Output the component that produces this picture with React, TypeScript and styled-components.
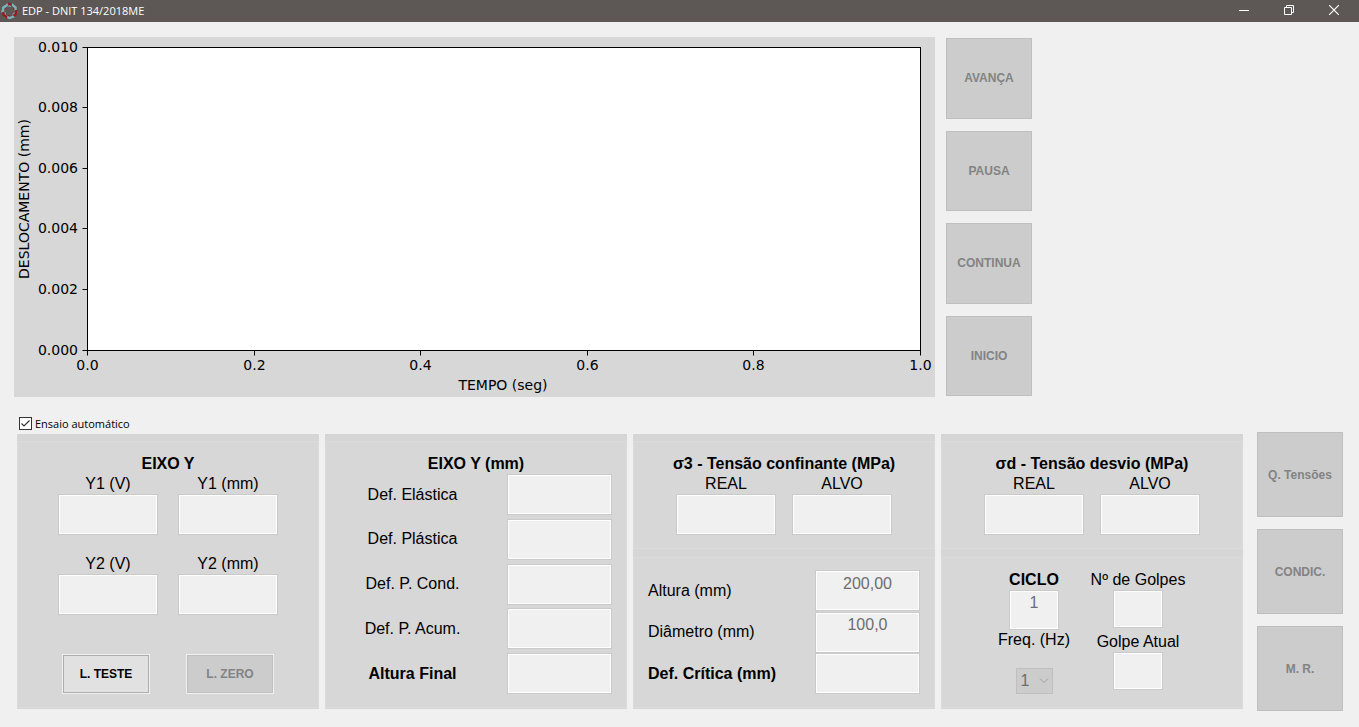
import React, { useState } from "react";
import styled, { createGlobalStyle, css } from "styled-components";

const GlobalStyle = createGlobalStyle`
  *, *::before, *::after { box-sizing: border-box; }
  body {
    margin: 0;
    background: #f0f0f0;
    color: #000;
    font: 16px/20px "Liberation Sans", Arial, sans-serif;
  }
`;

const uiFont = `"Open Sans", "Segoe UI", sans-serif`;

const TitleBar = styled.header`
  display: flex;
  align-items: center;
  height: 22px;
  padding: 0 3px 0 1px;
  background: #5d5855;
  color: #fff;
`;

const WindowTitle = styled.h1`
  flex: 1;
  margin: 0 0 0 4px;
  font: 400 11px/20px ${uiFont};
`;

const WindowButton = styled.button`
  display: flex;
  align-items: center;
  justify-content: center;
  width: 45px;
  height: 20px;
  margin-bottom: 2px;
  padding: 0;
  border: 0;
  background: transparent;
  color: #fff;
`;

const TopRow = styled.section`
  display: grid;
  grid-template-columns: minmax(0, 3fr) 86px minmax(0, 1fr);
  gap: 11px;
  padding: 15px 9px 0 14px;
`;

const ChartSvg = styled.svg`
  display: block;
  width: 100%;
  height: auto;
  background: #d7d7d7;
  font: 14px "DejaVu Sans", sans-serif;
`;

const ButtonColumn = styled.div`
  display: flex;
  flex-direction: column;
  gap: 12px;
`;

const RunColumn = styled(ButtonColumn)`
  padding: 1px 0;
`;

const buttonText = css`
  padding: 0;
  background: #cccccc;
  color: #838383;
  font: 700 12px/16px "Liberation Sans", Arial, sans-serif;
`;

const TileButton = styled.button`
  ${buttonText}
  flex: 1 0 auto;
  width: 86px;
  min-height: 80px;
  border: 1px solid #bfbfbf;
`;

const StageButton = styled(TileButton)`
  min-height: 85px;
`;

const PanelButton = styled.button`
  ${buttonText}
  width: 88px;
  height: 40px;
  border: 1px solid #f0f0f0;
  box-shadow: inset 0 0 0 1px #bfbfbf;

  &:enabled {
    background: #e1e1e1;
    color: #000;
    box-shadow: inset 0 0 0 1px #adadad;
  }
`;

const AutoLabel = styled.label`
  display: flex;
  align-items: center;
  gap: 3px;
  width: max-content;
  padding: 20px 0 2px 19px;
  font: 11px/13px ${uiFont};
`;

const CheckBox = styled.input`
  appearance: none;
  width: 13px;
  height: 13px;
  margin: 0;
  border: 1px solid #333;
  background: #fff;

  &:checked {
    background: #fff
      url("data:image/svg+xml,%3Csvg xmlns='http://www.w3.org/2000/svg' viewBox='0 0 11 11'%3E%3Cpath d='M1.5 5.5 4 8l5.5-5.5' fill='none' stroke='%23333' stroke-width='1.2'/%3E%3C/svg%3E");
  }
`;

const BottomRow = styled.section`
  display: flex;
  align-items: center;
  gap: 14px;
  padding: 0 16px 16px 17px;
`;

const Panels = styled.div`
  flex: 1;
  display: grid;
  grid-template-columns: repeat(4, minmax(0, 1fr));
  gap: 6px;
`;

const Panel = styled.div`
  display: flex;
  flex-direction: column;
  gap: 1px;
  min-height: 275px;
  padding-bottom: 1px;
  background: #d6d6d6;
`;

const Group = styled.section<{ $grow?: boolean }>`
  display: flex;
  flex-direction: column;
  flex: ${(p) => (p.$grow ? "1 0 auto" : "0 0 108px")};
  margin-top: 7px;
  padding-top: 12px;
  border: 1px solid #dbdbdb;
  background: #d7d7d7;
`;

const GroupTitle = styled.h2`
  margin: 0;
  font: 700 16px/20px "Liberation Sans", Arial, sans-serif;
  text-align: center;
`;

const FieldRow = styled.div<{ $gap: number; $after?: number }>`
  display: flex;
  justify-content: center;
  gap: ${(p) => p.$gap}px;
  margin-bottom: ${(p) => p.$after ?? 0}px;
`;

const StackField = styled.label<{ $bold?: boolean }>`
  display: flex;
  flex-direction: column;
  align-items: center;
  font-weight: ${(p) => (p.$bold ? 700 : 400)};
  white-space: nowrap;
`;

const ValueBox = styled.input<{ $width: number; $height?: number }>`
  width: ${(p) => p.$width}px;
  height: ${(p) => p.$height ?? 41}px;
  margin: 0;
  padding: 2px 2px 16px;
  border: 1px solid #cacaca;
  border-radius: 0;
  box-shadow: inset 0 0 0 1px #fff;
  background: #f0f0f0;
  color: #6d6d6d;
  font: 16px/18px "Liberation Sans", Arial, sans-serif;
  text-align: center;
`;

const RowList = styled.div`
  flex: 1;
  display: flex;
  flex-direction: column;
  justify-content: space-between;
  padding: 0 14px 13px;
`;

const RowField = styled.label<{ $bold?: boolean; $centered?: boolean }>`
  display: flex;
  align-items: center;
  font-weight: ${(p) => (p.$bold ? 700 : 400)};

  span {
    flex: 1;
    padding-right: ${(p) => (p.$centered ? 22 : 0)}px;
    text-align: ${(p) => (p.$centered ? "center" : "left")};
  }
`;

const CycleGrid = styled.div`
  display: grid;
  grid-template-columns: 104px 104px;
  justify-content: center;
  padding-right: 12px;
`;

const CycleColumn = styled.div<{ $gap: number }>`
  display: flex;
  flex-direction: column;
  align-items: center;
  gap: ${(p) => p.$gap}px;
`;

const FrequencyField = styled(StackField)`
  gap: 18px;
`;

const SelectWrap = styled.span`
  display: grid;
  align-items: center;

  > * { grid-area: 1 / 1; }
  > svg { justify-self: end; margin-right: 4px; pointer-events: none; }
`;

const FrequencySelect = styled.select`
  appearance: none;
  width: 37px;
  height: 26px;
  padding: 0 4px;
  border: 1px solid #bfbfbf;
  border-radius: 0;
  background: #cccccc;
  color: #6d6d6d;
  font: 16px/20px "Liberation Sans", Arial, sans-serif;
  opacity: 1;
`;

// Six overlapping blades around a hexagonal opening, alternating teal and red.
const Logo = () => (
  <svg width="17" height="18" viewBox="0 0 17 18" aria-hidden="true">
    {[0, 60, 120, 180, 240, 300].map((angle, i) => (
      <path
        key={angle}
        d="M.3 10.6 1.2 5 6.2 1.2 11.2 3.6 9.4 5 6.6 3.9 3.5 6.4 3 9.8Z"
        fill={i % 2 ? "#961c22" : "#74b4b8"}
        transform={`rotate(${angle} 8.5 9)`}
      />
    ))}
    <path d="M.3 10.6 1.2 5 6.2 1.2 7.4 3.4 3.5 6.4 3 9.8Z" fill="#74b4b8" />
  </svg>
);

const PLOT = { left: 73.5, right: 906.5, top: 10.5, bottom: 313.5 };
const X_TICKS = ["0.0", "0.2", "0.4", "0.6", "0.8", "1.0"];
const Y_TICKS = ["0.000", "0.002", "0.004", "0.006", "0.008", "0.010"];

const Chart = () => (
  <ChartSvg viewBox="0 0 921 360" role="img" aria-label="Deslocamento por tempo">
    <rect
      x={PLOT.left}
      y={PLOT.top}
      width={PLOT.right - PLOT.left}
      height={PLOT.bottom - PLOT.top}
      fill="#fff"
      stroke="#000"
    />
    {X_TICKS.map((t, i) => {
      const x = Math.floor(PLOT.left + ((PLOT.right - PLOT.left) * i) / 5) + 0.5;
      return (
        <g key={t}>
          <path d={`M${x} ${PLOT.bottom}v5`} stroke="#000" />
          <text x={x} y={333} textAnchor="middle">{t}</text>
        </g>
      );
    })}
    {Y_TICKS.map((t, i) => {
      const y = Math.floor(PLOT.bottom - 0.5 - ((PLOT.bottom - PLOT.top) * i) / 5) + 0.5;
      return (
        <g key={t}>
          <path d={`M${PLOT.left} ${y}h-5`} stroke="#000" />
          <text x={64} y={y + 4.5} textAnchor="end">{t}</text>
        </g>
      );
    })}
    <text x={489} y={353} textAnchor="middle">TEMPO (seg)</text>
    <text transform="translate(15 162) rotate(-90)" textAnchor="middle">DESLOCAMENTO (mm)</text>
  </ChartSvg>
);

type FieldProps = { label: string; value?: string; width?: number; height?: number; bold?: boolean };

const Stacked = ({ label, value = "", width = 100, height, bold }: FieldProps) => (
  <StackField $bold={bold}>
    {label}
    <ValueBox $width={width} $height={height} value={value} disabled readOnly />
  </StackField>
);

const Row = ({ label, value = "", bold, centered }: FieldProps & { centered?: boolean }) => (
  <RowField $bold={bold} $centered={centered}>
    <span>{label}</span>
    <ValueBox $width={105} value={value} disabled readOnly />
  </RowField>
);

export default function App() {
  const [auto, setAuto] = useState(true);

  return (
    <>
      <GlobalStyle />
      <TitleBar>
        <Logo />
        <WindowTitle>EDP - DNIT 134/2018ME</WindowTitle>
        <WindowButton aria-label="Minimizar">
          <svg width="10" height="10" stroke="currentColor"><path d="M0 5.5h10" /></svg>
        </WindowButton>
        <WindowButton aria-label="Restaurar">
          <svg width="10" height="10" fill="none" stroke="currentColor">
            <path d="M.5 2.5h7v7h-7zM2.5 2.5v-2h7v7h-2" />
          </svg>
        </WindowButton>
        <WindowButton aria-label="Fechar">
          <svg width="10" height="10" stroke="currentColor" strokeWidth="1.2"><path d="M0 0 10 10M10 0 0 10" /></svg>
        </WindowButton>
      </TitleBar>

      <main>
        <TopRow>
          <Chart />
          <RunColumn>
            {["AVANÇA", "PAUSA", "CONTINUA", "INICIO"].map((t) => (
              <TileButton key={t} disabled>{t}</TileButton>
            ))}
          </RunColumn>
        </TopRow>

        <AutoLabel>
          <CheckBox type="checkbox" checked={auto} onChange={(e) => setAuto(e.target.checked)} />
          Ensaio automático
        </AutoLabel>

        <BottomRow>
          <Panels>
            <Panel>
              <Group $grow>
                <GroupTitle>EIXO Y</GroupTitle>
                <FieldRow $gap={20} $after={19}>
                  <Stacked label="Y1 (V)" />
                  <Stacked label="Y1 (mm)" />
                </FieldRow>
                <FieldRow $gap={20} $after={39}>
                  <Stacked label="Y2 (V)" />
                  <Stacked label="Y2 (mm)" />
                </FieldRow>
                <FieldRow $gap={36}>
                  <PanelButton>L. TESTE</PanelButton>
                  <PanelButton disabled>L. ZERO</PanelButton>
                </FieldRow>
              </Group>
            </Panel>

            <Panel>
              <Group $grow>
                <GroupTitle>EIXO Y (mm)</GroupTitle>
                <RowList>
                  <Row label="Def. Elástica" centered />
                  <Row label="Def. Plástica" centered />
                  <Row label="Def. P. Cond." centered />
                  <Row label="Def. P. Acum." centered />
                  <Row label="Altura Final" centered bold />
                </RowList>
              </Group>
            </Panel>

            <Panel>
              <Group>
                <GroupTitle>σ3 - Tensão confinante (MPa)</GroupTitle>
                <FieldRow $gap={16}>
                  <Stacked label="REAL" />
                  <Stacked label="ALVO" />
                </FieldRow>
              </Group>
              <Group $grow>
                <RowList>
                  <Row label="Altura (mm)" value="200,00" />
                  <Row label="Diâmetro (mm)" value="100,0" />
                  <Row label="Def. Crítica (mm)" bold />
                </RowList>
              </Group>
            </Panel>

            <Panel>
              <Group>
                <GroupTitle>σd - Tensão desvio (MPa)</GroupTitle>
                <FieldRow $gap={16}>
                  <Stacked label="REAL" />
                  <Stacked label="ALVO" />
                </FieldRow>
              </Group>
              <Group $grow>
                <CycleGrid>
                  <CycleColumn $gap={0}>
                    <Stacked label="CICLO" value="1" width={50} height={40} bold />
                    <FrequencyField>
                      Freq. (Hz)
                      <SelectWrap>
                        <FrequencySelect disabled defaultValue="1">
                          <option>1</option>
                        </FrequencySelect>
                        <svg width="10" height="6" fill="none" stroke="#a0a0a0"><path d="M1 .5l4 4 4-4" /></svg>
                      </SelectWrap>
                    </FrequencyField>
                  </CycleColumn>
                  <CycleColumn $gap={4}>
                    <Stacked label="Nº de Golpes" width={50} height={38} />
                    <Stacked label="Golpe Atual" width={50} height={38} />
                  </CycleColumn>
                </CycleGrid>
              </Group>
            </Panel>
          </Panels>

          <ButtonColumn>
            {["Q. Tensões", "CONDIC.", "M. R."].map((t) => (
              <StageButton key={t} disabled>{t}</StageButton>
            ))}
          </ButtonColumn>
        </BottomRow>
      </main>
    </>
  );
}
